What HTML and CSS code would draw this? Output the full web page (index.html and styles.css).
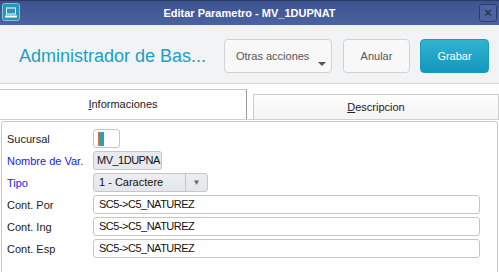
FILE: index.html
```html
<!DOCTYPE html>
<html>
<head>
    <title>Editar Parametro</title>
    <link rel="stylesheet" href="styles.css">
</head>
<body>
    <div class="window">
        <div class="titlebar">
            <svg class="app-icon" width="18" height="18" viewBox="0 0 18 18">
                <rect x="0.5" y="0.5" width="17" height="17" rx="2" fill="#2596b8" stroke="#7fc4da"/>
                <rect x="4" y="4.5" width="10" height="7" fill="#fff"/>
                <rect x="5" y="5.5" width="8" height="5" fill="#2596b8"/>
                <rect x="3" y="12.5" width="12" height="2" fill="#fff"/>
            </svg>
            <span class="title">Editar Parametro - MV_1DUPNAT</span>
            <div class="close-btn">&#215;</div>
        </div>

        <div class="header">
            <h1 class="heading">Administrador de Bas...</h1>
            <div class="actions">
                <button class="btn btn-more">Otras acciones<span class="caret"></span></button>
                <button class="btn">Anular</button>
                <button class="btn btn-primary">Grabar</button>
            </div>
        </div>

        <div class="tabs">
            <div class="tab tab-active"><u>I</u>nformaciones</div>
            <div class="tab tab-other"><u>D</u>escripcion</div>
        </div>

        <div class="panel">
            <div class="form-row">
                <label>Sucursal</label>
                <div class="field field-small"><span class="cursor"></span></div>
            </div>
            <div class="form-row">
                <label class="required">Nombre de Var.</label>
                <div class="field field-disabled field-name">MV_1DUPNA</div>
            </div>
            <div class="form-row">
                <label class="required">Tipo</label>
                <div class="field select">
                    <span class="select-value">1 - Caractere</span>
                    <span class="select-arrow">&#9660;</span>
                </div>
            </div>
            <div class="form-row">
                <label>Cont. Por</label>
                <div class="field field-wide">SC5-&gt;C5_NATUREZ</div>
            </div>
            <div class="form-row">
                <label>Cont. Ing</label>
                <div class="field field-wide">SC5-&gt;C5_NATUREZ</div>
            </div>
            <div class="form-row">
                <label>Cont. Esp</label>
                <div class="field field-wide">SC5-&gt;C5_NATUREZ</div>
            </div>
        </div>
    </div>
</body>
</html>
```

FILE: styles.css
```css
body {
    margin: 0;
    font-family: "Liberation Sans", Arial, sans-serif;
    background: #fff;
    overflow: hidden;
}
.window {
    width: 499px;
    height: 272px;
    overflow: hidden;
}
.titlebar {
    position: relative;
    height: 24px;
    border-top: 1px solid #2a3966;
    background: linear-gradient(#3d538f, #4b62a0);
    display: flex;
    align-items: center;
    justify-content: center;
}
.app-icon {
    position: absolute;
    left: 2px;
    top: 2px;
}
.title {
    color: #fff;
    font-weight: bold;
    font-size: 11px;
}
.close-btn {
    position: absolute;
    right: 2px;
    top: 3px;
    width: 16px;
    height: 16px;
    border: 1px solid #2c3c6c;
    border-radius: 3px;
    background: #4d64a0;
    color: #26315a;
    font-weight: bold;
    font-size: 13px;
    line-height: 15px;
    text-align: center;
}
.header {
    height: 59px;
    background: #f2f3f4;
    border-bottom: 1px solid #d9d9d9;
    display: flex;
    justify-content: space-between;
    padding-top: 14px;
    box-sizing: border-box;
}
.heading {
    margin: 0 0 0 19px;
    font-size: 18px;
    font-weight: normal;
    line-height: 34px;
    color: #1c9fc6;
}
.actions {
    display: flex;
    gap: 10px;
    margin-right: 10px;
}
.btn {
    height: 34px;
    padding: 0;
    border: 1px solid #d2d2d2;
    border-radius: 4px;
    background: #f8f8f8;
    color: #555;
    font-family: "Liberation Sans", Arial, sans-serif;
    font-size: 11px;
    width: 67px;
}
.btn-more {
    position: relative;
    width: 108px;
    margin-right: 1px;
    text-align: left;
    padding-left: 11px;
}
.caret {
    position: absolute;
    right: 5px;
    bottom: 6px;
    border-left: 4px solid transparent;
    border-right: 4px solid transparent;
    border-top: 4px solid #555;
}
.btn-primary {
    width: 69px;
    border-color: #1b9cc0;
    background: linear-gradient(#30b3d2, #1597bc);
    color: #fff;
}
.tabs {
    display: flex;
    align-items: flex-end;
    height: 36px;
    border-bottom: 1px solid #cfcfcf;
    box-sizing: border-box;
}
.tab {
    font-size: 11px;
    color: #222;
    text-align: center;
    box-sizing: border-box;
}
.tab-active {
    width: 247px;
    height: 30px;
    line-height: 28px;
    border-top: 1px solid #c8c8c8;
    border-right: 1px solid #9c9c9c;
    background: #fff;
}
.tab-other {
    flex: 1;
    margin-left: 6px;
    height: 25px;
    line-height: 24px;
    border: 1px solid #cbcbcb;
    border-bottom: none;
    background: linear-gradient(#fdfdfd, #f4f4f4);
}
.panel {
    margin: 1px 1px 0 1px;
    height: 160px;
    border: 1px solid #c9c9c9;
    border-radius: 3px;
    padding: 7px 0 0 5px;
    display: flex;
    flex-direction: column;
    gap: 3px;
}
.form-row {
    display: flex;
    align-items: center;
    height: 19px;
}
.form-row label {
    width: 86px;
    flex: none;
    font-size: 11px;
    color: #222;
}
.form-row label.required {
    color: #2020e0;
}
.field {
    box-sizing: border-box;
    height: 19px;
    border: 1px solid #c6c6c6;
    border-radius: 3px;
    background: #fff;
    font-size: 11px;
    color: #111;
    line-height: 17px;
    padding-left: 5px;
    white-space: nowrap;
    overflow: hidden;
}
.field-small {
    width: 27px;
    padding-left: 4px;
    display: flex;
    align-items: center;
}
.cursor {
    width: 5px;
    height: 14px;
    border-left: 1px solid #d9703a;
    background: #2e9fb6;
}
.field-disabled {
    background: #e6e9ee;
}
.field-name {
    width: 69px;
    padding-left: 3px;
    letter-spacing: -0.5px;
}
.select {
    width: 115px;
    display: flex;
    padding-left: 0;
    background: linear-gradient(#eceef1, #e3e6ea);
}
.select-value {
    width: 92px;
    padding-left: 5px;
    box-sizing: border-box;
    border-right: 1px solid #c6c6c6;
}
.select-arrow {
    flex: 1;
    text-align: center;
    font-size: 8px;
    color: #666;
}
.field-wide {
    width: 387px;
    letter-spacing: -0.5px;
}
```
